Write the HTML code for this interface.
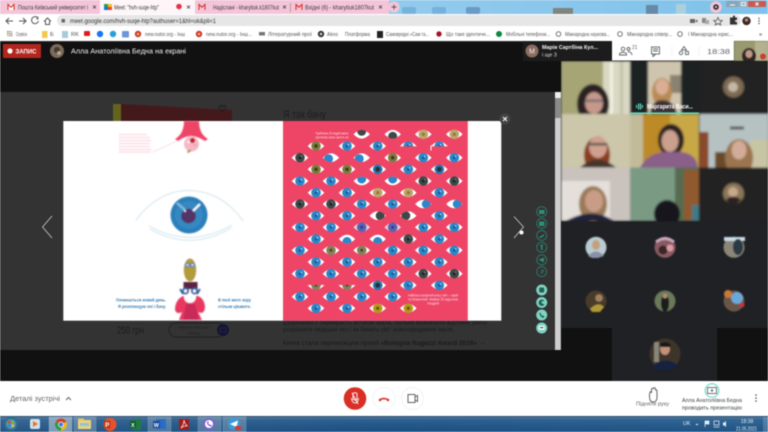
<!DOCTYPE html>
<html lang="uk"><head><meta charset="utf-8"><title>Meet</title>
<style>
html,body{margin:0;padding:0;background:#fff;width:768px;height:432px;overflow:hidden}
svg{display:block;filter:blur(.4px);font-family:"Liberation Sans","Noto Sans CJK JP",sans-serif}
</style></head><body>
<svg xmlns="http://www.w3.org/2000/svg" width="768" height="432" viewBox="0 0 768 432">
<defs>
<linearGradient id="sky" x1="0" y1="0" x2="1" y2="0"><stop offset="0" stop-color="#a8d4ee"/><stop offset="1" stop-color="#7fc2ea"/></linearGradient>
<linearGradient id="tb" x1="0" y1="0" x2="1" y2="0"><stop offset="0" stop-color="#2a5c8c"/><stop offset=".5" stop-color="#1c5488"/><stop offset="1" stop-color="#225a8c"/></linearGradient>
<linearGradient id="tbv" x1="0" y1="0" x2="0" y2="1"><stop offset="0" stop-color="#0d2c48" stop-opacity=".7"/><stop offset=".2" stop-color="#fff" stop-opacity=".08"/><stop offset="1" stop-color="#000" stop-opacity=".05"/></linearGradient>
<filter id="s1" x="-10%" y="-10%" width="120%" height="120%"><feGaussianBlur stdDeviation="1.1"/></filter>
<filter id="s2" x="-10%" y="-10%" width="120%" height="120%"><feGaussianBlur stdDeviation=".6"/></filter>
<filter id="s3" x="-5%" y="-5%" width="110%" height="110%"><feGaussianBlur stdDeviation=".3"/></filter>
<clipPath id="c"><path d="M-8.300 0Q0-8.800 8.300 0Q0 8.800-8.300 0Z"/></clipPath>
<clipPath id="v1"><rect x="561" y="61" width="207" height="160.500"/></clipPath>
<path id="w" d="M-8.300 0Q0-8.800 8.300 0Q0 8.800-8.300 0Z" fill="#fff"/>
<g id="b"><use href="#w"/><circle r="4.800" fill="#2b87c9"/><circle r="1.500" fill="#1d5c8e"/><circle cx="1.300" cy="-1.300" r=".8" fill="#bfe0f5"/></g>
<g id="d"><use href="#w"/><circle r="4.800" fill="#3e4a48"/><circle r="1.500" fill="#222"/><circle cx="1.300" cy="-1.300" r=".6" fill="#aaa"/></g>
<g id="o"><use href="#w"/><circle r="4.800" fill="#7c7c3c"/><circle r="1.700" fill="#3b3b1c"/></g>
<g id="q"><use href="#w"/><circle r="4.800" fill="#85805a"/><circle r="1.500" fill="#4a4630"/></g>
<g id="t"><use href="#w"/><circle r="4.800" fill="#bda566"/><circle r="1.700" fill="#8d7a48"/></g>
<g id="g"><use href="#w"/><circle r="4.800" fill="#b7981f"/><circle r="1.700" fill="#6e5a12"/></g>
<g id="n"><use href="#w"/><circle r="4.800" fill="#2b74a9"/><circle r="2.400" fill="#20323c"/></g>
<g id="p"><path d="M-8.300 0Q0-8.800 8.300 0Q0 8.800-8.300 0Z" fill="#e6cfe0"/><circle r="4.800" fill="#5a62b4"/><circle r="1.500" fill="#3a3a80"/></g>
</defs>

<!-- tab strip -->
<rect width="768" height="14" fill="url(#sky)"/>
<g fill="#5f9fd0" opacity=".55"><rect x="402" y="7" width="14" height="7" rx="2"/><rect x="432" y="7" width="14" height="7" rx="2"/></g>
<g fill="#5b86b5" opacity=".7"><rect x="466" y="7" width="14" height="7" rx="2"/></g>
<rect x="553" y="8" width="20" height="6" fill="#7a6a50" opacity=".7"/>
<rect x="646" y="5" width="12" height="9" fill="#5a7089" opacity=".7"/>
<rect x="676" y="4" width="10" height="10" fill="#b4d3d8" opacity=".8"/>
<rect x="710" y="5" width="10" height="9" fill="#9bc6d8" opacity=".8"/>
<path d="M0 14V0H100V14Z" fill="#f4c5d9"/>
<rect x="100" y="0" width="95" height="14" fill="#fdf5f8"/>
<rect x="195" y="0" width="194" height="14" fill="#f4c5d9"/>
<rect x="290" y="3" width=".8" height="9" fill="#a88"/>
<circle cx="394" cy="7" r="5.500" fill="#f4c5d9"/>
<path d="M391.500 7H396.500M394 4.500V9.500" stroke="#555" stroke-width=".9"/>
<g font-size="6.300" fill="#3c3c3c">
<path d="M8 4.500H14V10H8Z" fill="#fff"/><path d="M8 10V4.500L11 7.200L14 4.500V10" fill="none" stroke="#d8352a" stroke-width="1.100"/>
<text x="18" y="9.300" textLength="70" lengthAdjust="spacingAndGlyphs">Пошта Київський університет і</text>
<path d="M93 5L96 8M96 5L93 8" stroke="#444" stroke-width=".8" transform="translate(0 .5)"/>
<rect x="104" y="4" width="4" height="3" fill="#2a9a50"/><rect x="108" y="4" width="4" height="3" fill="#f4c20d"/><rect x="104" y="7" width="4" height="3" fill="#1a73e8"/><rect x="108" y="7" width="4" height="3" fill="#ea4335"/>
<text x="114" y="9.300" textLength="45" lengthAdjust="spacingAndGlyphs">Meet: "hvh-suqe-htp"</text>
<circle cx="179" cy="6.500" r="2.800" fill="#e2334a"/>
<path d="M187 5L190 8M190 5L187 8" stroke="#444" stroke-width=".8" transform="translate(0 .5)"/>
<path d="M199 10V4.500L202 7.200L205 4.500V10" fill="none" stroke="#d8352a" stroke-width="1.100"/>
<text x="213" y="9.300" textLength="66" lengthAdjust="spacingAndGlyphs">Надіслані - kharytiuk.k1807kut</text>
<path d="M283 5L286 8M286 5L283 8" stroke="#444" stroke-width=".8" transform="translate(0 .5)"/>
<path d="M296 10V4.500L299 7.200L302 4.500V10" fill="none" stroke="#d8352a" stroke-width="1.100"/>
<text x="305" y="9.300" textLength="69" lengthAdjust="spacingAndGlyphs">Вхідні (6) - kharytiuk1807kut</text>
<path d="M379 5L382 8M382 5L379 8" stroke="#444" stroke-width=".8" transform="translate(0 .5)"/>
</g>
<circle cx="716" cy="7" r="5.800" fill="#f4c5d9"/><circle cx="716" cy="7" r="2.800" fill="#333"/><circle cx="716" cy="7" r="1" fill="#ddd"/>
<rect x="726" y="1" width="13" height="6" rx="1" fill="#8aa4b8"/><rect x="739" y="1" width="9" height="6" fill="#9ab0c0"/><rect x="748" y="1" width="18" height="6" rx="1" fill="#c85a50"/>
<path d="M730 5H735" stroke="#fff" stroke-width="1"/><rect x="741.500" y="2.500" width="4" height="3" fill="none" stroke="#fff" stroke-width=".8"/><path d="M755.500 2.500L758.500 5.500M758.500 2.500L755.500 5.500" stroke="#fff" stroke-width=".9"/>

<!-- toolbar -->
<rect y="14" width="768" height="13" fill="#fff"/>
<g fill="none" stroke="#555" stroke-width="1">
<path d="M13 21H6M9 18L6 21L9 24"/>
<path d="M19 21H26M23 18L26 21L23 24"/>
<path d="M38 18.200A3.500 3.500 0 1 0 38.500 21"/><path d="M38 16.800V19H36" stroke-width=".8"/>
<path d="M44 21.500L47.500 18L51 21.500M45.500 21V24.500H49.500V21"/>
</g>
<rect x="57" y="15" width="684" height="11" rx="5.500" fill="#e6e6e6"/>
<rect x="61.500" y="19" width="3.500" height="3.500" rx=".6" fill="#666"/>
<text x="70" y="23.200" font-size="6.500" fill="#333" textLength="146" lengthAdjust="spacingAndGlyphs">meet.google.com/hvh-suqe-htp?authuser=1&amp;hl=uk&amp;pli=1</text>
<rect x="690" y="19" width="5" height="4" fill="#666"/><path d="M695 21L697.500 19.500V22.500Z" fill="#666"/>
<rect x="702" y="18" width="4" height="5" fill="#888"/><rect x="705" y="20" width="4" height="4" fill="#aaa"/>
<path d="M718 17.500L719.300 20.300L722.300 20.600L720 22.600L720.700 25L718 23.600L715.300 25L716 22.600L713.700 20.600L716.700 20.300Z" fill="none" stroke="#555" stroke-width=".8"/>
<path d="M730 18H733V17A1 1 0 0 1 735 17V18H737V20.500H736A1 1 0 0 0 736 22.500H737V25H730Z" fill="#333" transform="translate(0 -.5)"/>
<circle cx="746.500" cy="21" r="4.200" fill="#3a2a24"/><circle cx="746.500" cy="20" r="1.700" fill="#b08870"/>
<g fill="#444"><circle cx="759" cy="18.500" r=".7"/><circle cx="759" cy="21" r=".7"/><circle cx="759" cy="23.500" r=".7"/></g>

<!-- bookmarks -->
<rect y="27" width="768" height="14" fill="#fff"/>
<g fill="#d65">
<g fill="#e0523f"><rect x="7" y="31" width="1.300" height="1.300"/><rect x="9" y="31" width="1.300" height="1.300" fill="#3b78e7"/><rect x="11" y="31" width="1.300" height="1.300" fill="#f4b400"/><rect x="7" y="33" width="1.300" height="1.300" fill="#34a853"/><rect x="9" y="33" width="1.300" height="1.300"/><rect x="11" y="33" width="1.300" height="1.300" fill="#3b78e7"/><rect x="7" y="35" width="1.300" height="1.300" fill="#f4b400"/><rect x="9" y="35" width="1.300" height="1.300" fill="#34a853"/><rect x="11" y="35" width="1.300" height="1.300"/></g>
<rect x="42" y="31" width="5.500" height="7" fill="#f2c94c"/>
<rect x="62" y="31" width="6" height="7" fill="#a8cbd8"/>
<rect x="84" y="31" width="6" height="5" rx="1" fill="#e21b1b"/>
<circle cx="100" cy="34" r="3.200" fill="#1877f2"/>
<circle cx="113" cy="34" r="3.200" fill="#2a9fd8"/>
<rect x="122" y="31" width="7" height="6.500" rx="1" fill="#6f96d8"/>
<circle cx="138" cy="34" r="3.200" fill="#c33" /><circle cx="138" cy="34" r="1.300" fill="#f0c040"/>
<circle cx="199" cy="34" r="3.200" fill="#c33"/><circle cx="199" cy="34" r="1.300" fill="#f0c040"/>
<rect x="259" y="32" width="6" height="3.500" fill="#777"/>
<circle cx="321" cy="34" r="3.200" fill="#333"/><circle cx="321" cy="34" r="1.200" fill="#ddd"/>
<rect x="377" y="31" width="6" height="7" fill="#222"/>
<circle cx="439" cy="34" r="2.700" fill="#a5142a"/>
<circle cx="499" cy="34" r="3" fill="#0a8a3c"/>
</g>
<g fill="none" stroke="#666" stroke-width=".9"><circle cx="558.500" cy="34" r="2.300"/><circle cx="620" cy="34" r="2.300"/><circle cx="680" cy="34" r="2.300"/></g>
<g font-size="5.700" fill="#555" >
<text x="16" y="36" textLength="11" lengthAdjust="spacingAndGlyphs">Сервіси</text>
<text x="50" y="36">Б</text>
<text x="71" y="36">RK</text>
<text x="145" y="36" textLength="40" lengthAdjust="spacingAndGlyphs">new.nutor.org - Інш</text>
<text x="206" y="36" textLength="46" lengthAdjust="spacingAndGlyphs">new.nutor.org - Інш...</text>
<text x="268" y="36" textLength="44" lengthAdjust="spacingAndGlyphs">Літературний прої</text>
<text x="327" y="36" textLength="11" lengthAdjust="spacingAndGlyphs">Alexs</text>
<text x="345" y="36" textLength="25" lengthAdjust="spacingAndGlyphs">Платформа</text>
<text x="386" y="36" textLength="43" lengthAdjust="spacingAndGlyphs">Самоврядні «Сам та...</text>
<text x="446" y="36" textLength="44" lengthAdjust="spacingAndGlyphs">Що таке ідентичн...</text>
<text x="506" y="36" textLength="44" lengthAdjust="spacingAndGlyphs">Мобільні телефони...</text>
<text x="565" y="36" textLength="45" lengthAdjust="spacingAndGlyphs">Міжнародна наукова...</text>
<text x="627" y="36" textLength="45" lengthAdjust="spacingAndGlyphs">Міжнародна співпр...</text>
<text x="688" y="36" textLength="45" lengthAdjust="spacingAndGlyphs">І Міжнародна юрис...</text>
<text x="759" y="36" font-weight="700">»</text>
</g>

<!-- meet top -->
<rect y="41" width="768" height="51" fill="#111"/>
<rect x="0" y="41" width="768" height=".8" fill="#333"/>
<rect x="3" y="44" width="38" height="14" fill="#b3261e"/>
<circle cx="10" cy="51" r="2.600" fill="#fff"/>
<text x="15.500" y="53.300" font-size="6.300" font-weight="700" fill="#fff" textLength="21" lengthAdjust="spacingAndGlyphs">ЗАПИС</text>
<circle cx="57" cy="51" r="7" fill="#7a6a58"/><circle cx="57" cy="50" r="3" fill="#45382e"/><circle cx="59" cy="53" r="2" fill="#b0a690"/>
<text x="71" y="53.500" font-size="7.500" fill="#f0f0f0" textLength="115" lengthAdjust="spacingAndGlyphs">Алла Анатоліївна Бедна на екрані</text>
<rect x="523" y="41" width="90" height="20" fill="#1c1c1c"/>
<circle cx="532" cy="51" r="6.500" fill="#8c6c60"/>
<text x="532" y="53.500" font-size="7" fill="#eee" text-anchor="middle">M</text>
<text x="542" y="49" font-size="5.800" font-weight="700" fill="#f5f5f5" textLength="56" lengthAdjust="spacingAndGlyphs">Марія Сартбіна Кул...</text>
<text x="542" y="56.500" font-size="5.500" fill="#ddd">і ще 3</text>
<rect x="612" y="41" width="122" height="19.500" fill="#fff"/>
<g fill="none" stroke="#5f6368" stroke-width=".9">
<circle cx="623" cy="49" r="1.800"/><path d="M619.500 55V53.500Q623 51 626.500 53.500V55Z"/><circle cx="628.500" cy="49" r="1.500"/><path d="M628 52Q631.500 51.500 632 55"/>
<rect x="651.500" y="47" width="8" height="7" /><path d="M653 49H658M653 51H658"/><path d="M653 54L653 56.500L656 54"/>
<path d="M684 46.500L686.500 50H681.500Z"/><circle cx="681" cy="53" r="1.700"/><rect x="685.500" y="51.500" width="3" height="3"/>
</g>
<text x="632" y="49" font-size="5" fill="#5f6368">21</text>
<path d="M672 46V56M699 46V56" stroke="#eee" stroke-width=".6"/>
<text x="707" y="54" font-size="7.500" fill="#5f6368" textLength="23" lengthAdjust="spacingAndGlyphs">18:38</text>
<g filter="url(#s2)"><rect x="734" y="41" width="34" height="20" fill="#9a9a70"/><rect x="755" y="41" width="13" height="20" fill="#b5b090"/><ellipse cx="749" cy="56" rx="7" ry="8" fill="#2e2420"/><ellipse cx="749" cy="54" rx="3.500" ry="4" fill="#c09a88"/></g>
<circle cx="763" cy="56.500" r="3" fill="#c9402f"/>

<!-- stage -->
<rect y="92" width="561" height="258" fill="#333"/>
<rect x="555" y="92" width="5.800" height="258" fill="#cfcfcf"/>
<rect x="555" y="92" width="5.800" height="6" fill="#eee"/>
<rect x="555" y="98" width="5.800" height="20" fill="#8a8a8a"/>
<path d="M113 104H121V122H113Z" fill="#63631e"/>
<path d="M121 104L232 110V122H121Z" fill="#44191c"/>
<path d="M222.500 111.500L219 108Q218.500 105.500 220.500 105.500Q222 105.500 222.500 107Q223 105.500 224.500 105.500Q226.500 105.500 226 108Z" fill="none" stroke="#1a1a1a" stroke-width=".7"/>
<text x="283" y="118" font-size="11" fill="#1c1c1c" textLength="43" lengthAdjust="spacingAndGlyphs">Я так бачу</text>
<g fill="#1b1b1b" font-size="6.300">
<text x="283" y="324.500" textLength="204" lengthAdjust="spacingAndGlyphs">удержанки с перекрасть встигає мала, скільки визначити відтінки, уміти</text>
<text x="283" y="331.500" textLength="171" lengthAdjust="spacingAndGlyphs">розрізняти людське око і як бачить світ новонароджене маля.</text>
<text x="283" y="345" textLength="194" lengthAdjust="spacingAndGlyphs">Книга стала переможцем премії <tspan font-weight="700">«Bologna Ragazzi Award 2018»</tspan></text>
<text x="481" y="345">–</text>
</g>
<text x="117" y="333.500" font-size="10.500" fill="#1b1b1b" textLength="27" lengthAdjust="spacingAndGlyphs">250 грн</text>
<rect x="169" y="323" width="56" height="14" rx="7" fill="none" stroke="#1c1c1c" stroke-width=".7"/>
<text x="194" y="328.500" font-size="3.900" fill="#222" text-anchor="middle">Купити паперову</text>
<text x="194" y="334.500" font-size="3.900" fill="#222" text-anchor="middle">книжку</text>
<circle cx="223" cy="330" r="6" fill="#14143a"/>
<rect x="220" y="328" width="6" height="4" fill="none" stroke="#333" stroke-width=".6"/>

<!-- modal -->
<rect x="63.300" y="121" width="438" height="199.700" fill="#fff"/>
<rect x="283" y="121" width="184.800" height="199.700" fill="#ee4566"/>

<!-- left page art -->
<g filter="url(#s2)">
<path d="M175 139Q184 134 184 121H199Q199 134 208 139L205 141Q197 136 191 136Q185 136 178 141Z" fill="#ee4566"/>
<circle cx="191.500" cy="144" r="7.500" fill="#f8b5c5"/><circle cx="192.500" cy="140.500" r="2.500" fill="#b52030"/>
<circle cx="188.500" cy="142" r="1.200" fill="#fff"/><circle cx="195" cy="145" r="1.200" fill="#e8a0b0"/>
<path d="M188 150L187 153.500L192 150.500Z" fill="#a88a3c"/>
<path d="M153 152L177 141" stroke="#f8c4d0" stroke-width=".6"/>
<g stroke="#f8b8c6" stroke-width=".9" stroke-dasharray="1.200 .6">
<path d="M119 134.500H147M119 137.500H150M119 140.500H151M119 143.500H150M119 146.500H150M119 149.500H151M119 152H151"/>
</g>
<g fill="none" stroke="#bcd8e6" stroke-width=".9" stroke-dasharray="1.500 .5">
<path d="M136 220Q158 191 188 190.500Q222 191 243 221"/>
<path d="M149 226Q190 249 232 225"/>
<path d="M150 229Q190 252 231 228"/>
</g>
<circle cx="189" cy="215" r="18.500" fill="#2a7fb9"/>
<circle cx="189" cy="215" r="14" fill="#3a8cc4" opacity=".7"/>
<circle cx="188.500" cy="216" r="7.300" fill="#533568"/>
<path d="M193 211L200 204" stroke="#fff" stroke-width="2.200"/>
<path d="M185 210L177 203" stroke="#7fb7da" stroke-width="2.500"/>
<circle cx="185" cy="211" r="1" fill="#fff"/>
<ellipse cx="190" cy="270" rx="6.200" ry="11.500" fill="#b29a3e"/>
<circle cx="187.500" cy="265" r="2.300" fill="#3a80c8"/><circle cx="192.500" cy="265" r="2.300" fill="#3a80c8"/>
<circle cx="187.500" cy="265" r="1" fill="#fff"/><circle cx="192.500" cy="265" r="1" fill="#fff"/>
<rect x="183.500" y="282" width="14" height="7" fill="#5c2442"/>
<path d="M183 296Q175 300 175 310Q177 315 182 312L179 320H202L198 312Q204 315 205 308Q205 299 198 296Z" fill="#e9375f"/>
<path d="M183 320L186 304H195L199 320Z" fill="#c92c5a"/>
<circle cx="190" cy="297" r="6" fill="#fff"/>
<circle cx="185.500" cy="291" r="3.600" fill="#2d5f9e"/><circle cx="194.500" cy="291" r="3.600" fill="#2d5f9e"/>
<circle cx="185.500" cy="291" r="1.600" fill="#fff"/><circle cx="194.500" cy="291" r="1.600" fill="#fff"/>
<path d="M180 289L183 294M200 289L197 294" stroke="#2d5f9e" stroke-width="1.800"/>
</g>
<g font-size="4.900" fill="#3c7fb0" font-weight="700">
<text x="116" y="301.500" textLength="50" lengthAdjust="spacingAndGlyphs">Починається новий день.</text>
<text x="118" y="307.800" textLength="48" lengthAdjust="spacingAndGlyphs">Я розплющую очі і бачу.</text>
<text x="218" y="301.500" textLength="33" lengthAdjust="spacingAndGlyphs">В полі мого зору</text>
<text x="218" y="307.800" textLength="33" lengthAdjust="spacingAndGlyphs">стільки цікавого.</text>
</g>

<!-- right page eyes -->
<g font-size="3.200" fill="#fbdbe3">
<text x="315.500" y="134.500" textLength="33" lengthAdjust="spacingAndGlyphs">Приблизно 25 людей мають</text>
<text x="315.500" y="138.500" textLength="33" lengthAdjust="spacingAndGlyphs">протягом свого життя очі</text>
<text x="408" y="296.500" textLength="50" lengthAdjust="spacingAndGlyphs">Найбільш поширений колір у світі — карий</text>
<text x="408" y="300.500" textLength="50" lengthAdjust="spacingAndGlyphs">та блакитний. Майже 25 відсотків</text>
<text x="427" y="304.500" textLength="12" lengthAdjust="spacingAndGlyphs">людей</text>
</g>
<g filter="url(#s3)">
<!-- R1 -->
<g transform="translate(361.700 134.300)" clip-path="url(#c)"><use href="#w"/><circle cy="-3" r="4.500" fill="#3e4a48"/></g>
<g transform="translate(392.700 134.300)" clip-path="url(#c)"><use href="#w"/><circle cy="2" r="4.500" fill="#3e4a48"/></g>
<use href="#t" x="423.300" y="134.300"/><use href="#t" x="454.300" y="134.300"/>
<!-- R2 -->
<use href="#o" x="316" y="146"/><use href="#b" x="347" y="146"/><use href="#b" x="377.700" y="146"/>
<use href="#b" x="408.300" y="146"/><rect x="399" y="146.300" width="18" height="6" fill="#ee4566"/>
<use href="#b" x="439.300" y="146"/><rect x="430" y="146.300" width="18" height="6" fill="#ee4566"/><rect x="430.500" y="145.500" width="1" height="5" fill="#fff"/>
<!-- R3 -->
<use href="#d" x="300" y="157.700"/>
<g transform="translate(331 157.700)" clip-path="url(#c)"><use href="#w"/><circle cx="-2.500" cy="1" r="4.500" fill="#2b87c9"/></g>
<g transform="translate(361.700 157.700)" clip-path="url(#c)"><use href="#w"/><circle cx="-2.500" cy="1" r="4.500" fill="#2b87c9"/></g>
<use href="#o" x="392.700" y="157.700"/><use href="#b" x="423.300" y="157.700"/><use href="#b" x="454.300" y="157.700"/>
<!-- R4 -->
<use href="#o" x="316" y="169.300"/><use href="#o" x="347" y="169.300"/><use href="#n" x="377.700" y="169.300"/><use href="#b" x="408.300" y="169.300"/><use href="#n" x="439.300" y="169.300"/>
<!-- R5 -->
<use href="#b" x="300" y="181"/><use href="#b" x="331" y="181"/>
<g transform="translate(361.700 181)" clip-path="url(#c)"><use href="#w"/><circle cy="-2" r="4.500" fill="#2b87c9"/></g>
<g transform="translate(392.700 181)" clip-path="url(#c)"><use href="#w"/><circle cy="-2" r="4.500" fill="#2b87c9"/></g>
<use href="#d" x="423.300" y="181"/><use href="#d" x="454.300" y="181"/>
<!-- R6 -->
<use href="#b" x="316" y="192.700"/><use href="#b" x="347" y="192.700"/><use href="#t" x="377.700" y="192.700"/><use href="#t" x="408.300" y="192.700"/><use href="#b" x="439.300" y="192.700"/>
<!-- R7 -->
<use href="#d" x="300" y="204"/><use href="#d" x="331" y="204"/><use href="#b" x="361.700" y="204"/><use href="#b" x="392.700" y="204"/>
<g transform="translate(423.300 204)" clip-path="url(#c)"><use href="#w"/><circle cx="3" r="4.500" fill="#2b87c9"/></g>
<g transform="translate(454.300 204)" clip-path="url(#c)"><use href="#w"/><circle cx="3" r="4.500" fill="#2b87c9"/></g>
<!-- R8 -->
<use href="#b" x="316" y="215.700"/><use href="#b" x="347" y="215.700"/>
<g transform="translate(377.700 215.700)" clip-path="url(#c)"><use href="#w"/><circle cx="2.500" r="4.500" fill="#3e4a48"/></g>
<g transform="translate(408.300 215.700)" clip-path="url(#c)"><use href="#w"/><circle cx="-2.500" r="4.500" fill="#3e4a48"/></g>
<use href="#b" x="439.300" y="215.700"/>
<!-- R9 -->
<use href="#b" x="300" y="227.300"/><use href="#b" x="331" y="227.300"/><use href="#p" x="361.700" y="227.300"/><use href="#p" x="392.700" y="227.300"/><use href="#b" x="423.300" y="227.300"/><use href="#b" x="454.300" y="227.300"/>
<!-- R10 -->
<use href="#b" x="316" y="239"/>
<g transform="translate(347 239)" clip-path="url(#c)"><use href="#w"/><circle cy="2.500" r="4.500" fill="#2b87c9"/></g>
<g transform="translate(377.700 239)" clip-path="url(#c)"><use href="#w"/><circle cy="2.500" r="4.500" fill="#2b87c9"/></g>
<use href="#d" x="408.300" y="239"/><use href="#b" x="439.300" y="239"/>
<!-- R11 -->
<use href="#b" x="300" y="250.300"/><use href="#q" x="331" y="250.300"/><use href="#q" x="361.700" y="250.300"/><use href="#b" x="392.700" y="250.300"/><use href="#b" x="423.300" y="250.300"/><use href="#b" x="454.300" y="250.300"/>
<!-- R12 -->
<use href="#b" x="316" y="262"/><use href="#b" x="347" y="262"/><use href="#b" x="377.700" y="262"/><use href="#b" x="408.300" y="262"/><use href="#b" x="439.300" y="262"/>
<!-- R13 -->
<use href="#b" x="300" y="273.700"/><use href="#b" x="331" y="273.700"/><use href="#b" x="361.700" y="273.700"/><use href="#b" x="392.700" y="273.700"/><use href="#d" x="423.300" y="273.700"/><use href="#d" x="454.300" y="273.700"/>
<!-- R14 -->
<use href="#q" x="316" y="285.300"/><rect x="307" y="278" width="18" height="7" fill="#ee4566"/>
<use href="#q" x="347" y="285.300"/><rect x="338" y="278" width="18" height="7" fill="#ee4566"/>
<use href="#n" x="377.700" y="285.300"/><use href="#b" x="408.300" y="285.300"/><use href="#b" x="439.300" y="285.300"/>
<!-- R15 -->
<use href="#b" x="300" y="296.700"/><use href="#b" x="331" y="296.700"/><use href="#b" x="361.700" y="296.700"/><use href="#b" x="392.700" y="296.700"/>
<!-- R16 -->
<use href="#b" x="316" y="308.300"/><use href="#b" x="347" y="308.300"/><use href="#g" x="377.700" y="308.300"/><use href="#g" x="408.300" y="308.300"/>
</g>

<!-- close -->
<circle cx="505" cy="119" r="5.500" fill="#444"/>
<path d="M503 117L507 121M507 117L503 121" stroke="#fff" stroke-width="1"/>
<!-- arrows -->
<path d="M52 216L42.500 227L52 238" fill="none" stroke="#ddd" stroke-width=".7"/>
<path d="M514 216.500L523.500 227L514 238" fill="none" stroke="#ddd" stroke-width=".7"/>
<circle cx="521.500" cy="232.500" r="2" fill="#fff"/>
<!-- social -->
<g fill="none" stroke="#2b8f78" stroke-width=".7">
<circle cx="541.700" cy="211.700" r="5"/><circle cx="541.700" cy="223.500" r="5"/><circle cx="541.700" cy="235.500" r="5"/><circle cx="541.700" cy="247.300" r="5"/><circle cx="541.700" cy="259.800" r="5"/><circle cx="541.700" cy="271.600" r="5"/>
</g>
<g fill="#2b8f78">
<rect x="539" y="210" width="5.500" height="4"/><rect x="539" y="221.500" width="5.500" height="4.500"/>
<path d="M538.500 237Q541.500 236.500 544.500 233.500Q544 237.500 540 238Z"/>
<path d="M541 250V246H540V245H541.500Q542 244 543 244.300V245.500H542.500V250Z"/>
<path d="M538.500 259.500L544.500 257.500L543.500 262.500Z"/>
<path d="M541 274L542 269.500Q544 270 543.500 272Q542 273 541.500 272" fill="none" stroke="#2b8f78" stroke-width=".6"/>
</g>
<g fill="#7ed3c2"><circle cx="541.700" cy="290" r="5.500"/><circle cx="541.700" cy="302.500" r="5.500"/><circle cx="541.700" cy="315" r="5.500"/><circle cx="541.700" cy="328" r="5.500"/></g>
<rect x="539.200" y="287.500" width="5" height="5" rx="1" fill="#245f55"/>
<path d="M544.500 301A3.200 3.200 0 1 0 544.500 304.500L542.500 303.500Q541 303 541.500 301.500Z" fill="#245f55"/>
<path d="M539.500 312.500Q539 316 543 318L544.500 316.500L543 315.300L542 316Q541 315 541 313.500Z" fill="#245f55"/>
<rect x="538.800" y="325.800" width="5.800" height="4" fill="#fff"/><rect x="540" y="327" width="3.400" height="1.200" fill="#245f55"/>
<!-- below stage -->
<rect y="350" width="561" height="31" fill="#111"/>

<!-- participants panel -->
<rect x="561" y="61" width="207" height="320" fill="#202124"/>
<rect x="561" y="328" width="51" height="53" fill="#111"/>
<rect x="717" y="328" width="51" height="53" fill="#111"/>
<g clip-path="url(#v1)" filter="url(#s1)">
<!-- c1 -->
<rect x="561" y="61" width="69" height="53" fill="#a6a576"/>
<rect x="603" y="61" width="27" height="53" fill="#d9d8c2"/>
<rect x="610" y="61" width="3" height="53" fill="#f3f1e4"/><rect x="620" y="61" width="3" height="53" fill="#c3c1a8"/>
<ellipse cx="593" cy="104" rx="16" ry="20" fill="#2a2424"/>
<ellipse cx="594" cy="103" rx="9" ry="11" fill="#c5988a"/>
<rect x="585" y="99.500" width="18" height="2.500" fill="#55606a" opacity=".7"/>
<!-- c2 -->
<rect x="630" y="61" width="69" height="53" fill="#1f2023"/>
<rect x="648" y="61" width="33" height="53" fill="#cfc4ae"/>
<rect x="670" y="75" width="11" height="18" fill="#8a8270"/>
<ellipse cx="662" cy="92" rx="10" ry="14" fill="#b98a54"/>
<ellipse cx="662" cy="87" rx="6.500" ry="8" fill="#d9ae94"/>
<path d="M650 114Q652 100 662 100Q674 100 677 114Z" fill="#3a3036"/>
<!-- c3 -->
<rect x="699.500" y="61" width="69" height="53" fill="#202124"/>
<circle cx="733.500" cy="87" r="10.500" fill="#7d6a52"/><circle cx="733" cy="87" r="5" fill="#c4b8a4"/>
<!-- r2c1 -->
<rect x="561" y="114" width="69" height="53.500" fill="#ccc6aa"/>
<ellipse cx="597" cy="155" rx="13" ry="18" fill="#8a3e22"/>
<ellipse cx="598" cy="147" rx="9" ry="11" fill="#cfa08e"/>
<rect x="588" y="143" width="19" height="2.500" fill="#555"/>
<path d="M580 167.500Q597 152 616 167.500Z" fill="#45342c"/>
<!-- r2c2 -->
<rect x="630" y="114" width="13" height="53.500" fill="#c2bb9a"/>
<rect x="643" y="114" width="27" height="53.500" fill="#bc8a28"/>
<rect x="670" y="114" width="29" height="53.500" fill="#c8a746"/>
<ellipse cx="671" cy="140" rx="13" ry="16" fill="#2c2222"/>
<ellipse cx="670" cy="141" rx="8.500" ry="11" fill="#cba08c"/>
<path d="M640 167.500Q650 150 672 152Q696 150 698 167.500Z" fill="#8a5f88"/>
<!-- r2c3 -->
<rect x="699.500" y="114" width="69" height="53.500" fill="#b6c2c2"/>
<rect x="699.500" y="132" width="9" height="36" fill="#8a4a2c"/>
<rect x="715" y="152" width="14" height="16" fill="#6a4a2a"/>
<rect x="750" y="140" width="18" height="28" fill="#c8c5a5"/>
<ellipse cx="739" cy="158" rx="14" ry="19" fill="#9a7550"/>
<ellipse cx="739" cy="150" rx="7.500" ry="9.500" fill="#d2ac98"/>
<path d="M730 128H744" stroke="#555" stroke-width="3"/>
<!-- r3c1 -->
<rect x="561" y="167.500" width="69" height="53.500" fill="#c9c2bd"/>
<rect x="561" y="181" width="49" height="40" fill="#e4dfda"/>
<ellipse cx="593" cy="204" rx="14" ry="18" fill="#9a7a58"/>
<ellipse cx="594" cy="201" rx="9" ry="11" fill="#c89c86"/>
<path d="M566 221Q592 206 614 221Z" fill="#24233a"/>
<!-- r3c2 -->
<rect x="630" y="167.500" width="69" height="53.500" fill="#586a50"/>
<rect x="630" y="167.500" width="45" height="53.500" fill="#7a9a84"/>
<rect x="684" y="170" width="15" height="50" fill="#905a2e"/>
<ellipse cx="667" cy="214" rx="13" ry="14" fill="#14131f"/>
<rect x="692" y="205" width="7" height="16" fill="#3f7a88"/>
<!-- r3c3 -->
<rect x="699.500" y="167.500" width="69" height="53.500" fill="#202124"/>
<circle cx="733.500" cy="193.500" r="10.500" fill="#8a7658"/><circle cx="733" cy="192" r="5" fill="#c8a88a"/><path d="M726 200Q733 193 741 200L736 204H730Z" fill="#2a2020"/>
</g>
<rect x="630" y="112.500" width="69" height="1.500" fill="#5de0c8"/>
<g fill="#5de0c8"><rect x="636" y="105" width="1" height="3"/><rect x="638" y="103.500" width="1.200" height="6"/><rect x="640" y="103.500" width="1.200" height="6"/><rect x="642" y="105" width="1" height="3"/></g>
<text x="647" y="108.500" font-size="6.300" font-weight="700" fill="#fff" textLength="46" lengthAdjust="spacingAndGlyphs">Маргарита Васи...</text>
<g filter="url(#s2)">
<circle cx="596" cy="247.300" r="10.500" fill="#b8ccd2"/><ellipse cx="596" cy="245" rx="4" ry="5" fill="#c4a080"/><path d="M588 256Q596 247 604 256L598 258H592Z" fill="#8a90a8"/>
<circle cx="665" cy="247.300" r="10.500" fill="#8a5a62"/><circle cx="663" cy="250" r="4.500" fill="#3a2626"/><circle cx="670" cy="248" r="3.500" fill="#d89ca4"/><path d="M656 242Q665 235 674 242" fill="none" stroke="#c8a8c0" stroke-width="3"/>
<circle cx="734" cy="247.300" r="10.500" fill="#8b8678"/><path d="M724 241H745V237H724Z" fill="#c8dce6"/><ellipse cx="738" cy="247" rx="5" ry="8" fill="#2c3a44"/>
<circle cx="596" cy="301" r="10.500" fill="#4a3a2c"/><circle cx="599" cy="298" r="3.800" fill="#a08060"/><path d="M590 309Q598 301 604 307L600 312H592Z" fill="#b09a34"/>
<circle cx="665" cy="301" r="10.500" fill="#6a7a5a"/><ellipse cx="665" cy="303" rx="4" ry="9" fill="#1f1a1a"/><circle cx="665" cy="296" r="2.500" fill="#b08a74"/>
<circle cx="734" cy="301" r="10.500" fill="#6a5448"/><circle cx="737" cy="298" r="6" fill="#6aa8d8"/><circle cx="728" cy="294" r="4" fill="#c87a30"/><circle cx="742" cy="305" r="2.500" fill="#c83040"/>
<circle cx="665" cy="354" r="15.500" fill="#3e342c"/><rect x="654" y="342" width="5" height="20" fill="#8a8678"/><ellipse cx="665" cy="349" rx="5" ry="6" fill="#c09278"/><path d="M651 368Q664 354 679 366L670 370H656Z" fill="#15233f"/><path d="M660 344Q666 340 671 345L670 347H661Z" fill="#1a1614"/>
</g>

<!-- bottom bar -->
<rect y="381" width="768" height="35.500" fill="#fff"/>
<text x="10" y="401" font-size="7" fill="#5f6368" textLength="50" lengthAdjust="spacingAndGlyphs">Деталі зустрічі</text>
<path d="M66 400L68.500 397.500L71 400" fill="none" stroke="#5f6368" stroke-width="1"/>
<circle cx="355" cy="398.500" r="11.300" fill="#d93025"/>
<path d="M353 393.500Q355 392 357 393.500V399Q355 401 353 399ZM351.500 398Q352 403 355 403Q358 403 358.500 398M352 393L358 404" fill="none" stroke="#fff" stroke-width=".9"/>
<circle cx="384" cy="398.500" r="11" fill="#fff" stroke="#eee" stroke-width=".7"/>
<path d="M378.500 399.500Q384 396 389.500 399.500L388.500 401.500L386.500 400.500V399.500H381.500V400.500L379.500 401.500Z" fill="#d93025"/>
<circle cx="412.500" cy="398.500" r="11" fill="#fff" stroke="#eee" stroke-width=".7"/>
<path d="M408 394.500H415V402.500H408Z M415 397L417.500 395.500V401.500L415 400Z" fill="none" stroke="#5f6368" stroke-width="1"/>
<path d="M650 400Q649 395 650 392Q651 391 651.500 393V389Q653 387.500 653.500 389V388Q655 387 655.500 389V390Q657 389.500 657 391V397Q657 402 653.500 402Q651 402 650 400Z" fill="none" stroke="#555" stroke-width=".9"/>
<text x="636" y="405.500" font-size="5.600" fill="#5f6368" textLength="33" lengthAdjust="spacingAndGlyphs">Підняти руку</text>
<circle cx="712" cy="390.500" r="6.800" fill="#fff" stroke="#5dd4bd" stroke-width="1"/>
<rect x="707.500" y="387.500" width="9" height="6" fill="none" stroke="#5f6368" stroke-width=".9"/><rect x="711" y="389.500" width="2" height="2" fill="#5f6368"/>
<g font-size="5.700" fill="#3c4043">
<text x="682" y="402" textLength="60" lengthAdjust="spacingAndGlyphs">Алла Анатоліївна Бедна</text>
<text x="682" y="409.500" textLength="60" lengthAdjust="spacingAndGlyphs">проводить презентацію</text>
</g>
<g fill="#444"><circle cx="756" cy="395" r=".8"/><circle cx="756" cy="398" r=".8"/><circle cx="756" cy="401" r=".8"/></g>

<!-- taskbar -->
<rect y="416" width="768" height="16" fill="url(#tb)"/>
<rect y="416" width="768" height="16" fill="url(#tbv)"/>
<circle cx="11" cy="424" r="7" fill="#2d6e90"/><circle cx="11" cy="424" r="5" fill="#5a94b0"/>
<rect x="8" y="421" width="2.500" height="2.500" fill="#d9482a"/><rect x="11.500" y="421" width="2.500" height="2.500" fill="#7cbb34"/><rect x="8" y="424.500" width="2.500" height="2.500" fill="#2f86d8"/><rect x="11.500" y="424.500" width="2.500" height="2.500" fill="#f2c038"/>
<rect x="30" y="419" width="10" height="10" rx="2" fill="#cfe0ee"/><path d="M33 421L38 424L33 427Z" fill="#e67722"/>
<g fill="#fff" fill-opacity=".22" stroke="#a0c0d8" stroke-opacity=".5" stroke-width=".5">
<rect x="49" y="417" width="23" height="15"/><rect x="74" y="417" width="22" height="15"/><rect x="148" y="417" width="23" height="15"/><rect x="198" y="417" width="23" height="15"/><rect x="223" y="417" width="23" height="15"/>
</g>
<rect x="49" y="417" width="23" height="15" fill="#fff" fill-opacity=".25"/>
<circle cx="61" cy="424.500" r="6" fill="#e8b91e"/><path d="M61 424.500L55.800 421.500A6 6 0 0 1 66.200 421.500Z" fill="#d8392c"/><path d="M61 424.500V430.500A6 6 0 0 1 55.800 421.500Z" fill="#2e9a4a"/><circle cx="61" cy="424.500" r="2.500" fill="#3b78e0" stroke="#fff" stroke-width=".7"/>
<rect x="78" y="420" width="13" height="9" fill="#eed27a"/><rect x="78" y="418.500" width="6" height="2" fill="#e8c360"/><rect x="80" y="423" width="9" height="3" fill="#8fc4da"/>
<circle cx="110" cy="424.500" r="6.500" fill="#e8512a"/><rect x="104" y="420.500" width="6.500" height="8" fill="#c23a1a"/><text x="105.300" y="427" font-size="6" font-weight="700" fill="#fff">P</text>
<rect x="132" y="419" width="9" height="11" fill="#1f7a45"/><rect x="130" y="421" width="6" height="7" fill="#0e5c32"/><text x="131" y="427" font-size="5.500" font-weight="700" fill="#fff">X</text>
<rect x="156" y="419" width="10" height="10" fill="#2b6cc4"/><rect x="153" y="421" width="7" height="7" fill="#174a9a"/><text x="153.800" y="427" font-size="5.500" font-weight="700" fill="#fff">W</text>
<rect x="179" y="419" width="10" height="10.500" fill="#a81a1a"/><path d="M181 428Q184 424 184 420Q184.500 424 187.500 426Q184 425.500 181 428Z" fill="none" stroke="#fff" stroke-width=".7"/>
<circle cx="209" cy="424" r="6" fill="#7a60cc"/><circle cx="209" cy="424" r="4" fill="#fff"/><path d="M207 422Q207 426 211 426.500L212 425.500L210.500 424.500L210 425Q208.700 424.500 208.200 423L208.800 422.500L208 421Z" fill="#7a60cc"/>
<circle cx="234" cy="424" r="6" fill="#3a9ad8"/><path d="M230 424L238 420.500L236.500 427.500L234 426Z" fill="#fff"/><rect x="235" y="426" width="6" height="4" rx="1" fill="#d8392c"/>
<g fill="#e6eef5">
<text x="683" y="425" font-size="5.300">UK</text>
<path d="M695.500 425L697 423.500L698.500 425Z"/>
<path d="M705 421V427M705 421H709V424H705" stroke="#e6eef5" stroke-width=".7"/>
<rect x="714" y="421" width="5" height="4" fill="none" stroke="#e6eef5" stroke-width=".7"/><path d="M713.500 427H719.500" stroke="#e6eef5" stroke-width=".7"/>
<path d="M723 422.500H724.500L726 421V427L724.500 425.500H723Z"/>
<text x="747" y="423" font-size="5" text-anchor="middle">18:38</text>
<text x="736" y="430.300" font-size="5" textLength="21" lengthAdjust="spacingAndGlyphs">21.05.2021</text>
</g>
<rect x="763" y="417" width="5" height="15" fill="#fff" fill-opacity=".18"/>
</svg>
</body></html>
